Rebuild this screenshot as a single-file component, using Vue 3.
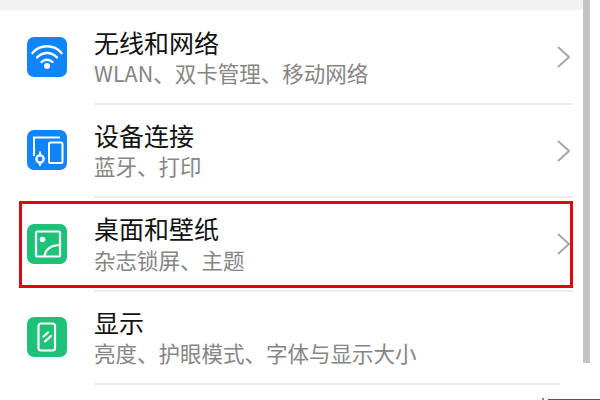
<template>
  <div class="screen">
    <div class="top-band"></div>
    <div class="main">
      <ul class="list">
        <li v-for="item in items" :key="item.title" class="row">
          <div class="icon" :class="item.color">
            <svg v-if="item.icon === 'wifi'" viewBox="0 0 40 40" width="40" height="40" fill="none" stroke="#fff" stroke-width="2.4" stroke-linecap="round">
              <path d="M5.5 16C13 7 27 7 34.5 16" />
              <path d="M10 20.5C16 14.5 24 14.5 30 20.5" />
              <path d="M14.5 25C17.5 22 22.5 22 25.5 25" />
              <circle cx="20" cy="29" r="3" fill="#fff" stroke="none" />
            </svg>
            <svg v-else-if="item.icon === 'devices'" viewBox="0 0 40 40" width="40" height="40" fill="none" stroke="#fff" stroke-width="2">
              <path d="M7 26V7.5H33" />
              <rect x="22" y="12.5" width="13.5" height="20.5" rx="1.5" />
              <circle cx="13" cy="29" r="3.6" stroke-width="2.4" />
              <path d="M13 21.5V25M13 33V36" />
            </svg>
            <svg v-else-if="item.icon === 'wallpaper'" viewBox="0 0 40 40" width="40" height="40" fill="none" stroke="#fff" stroke-width="2.2">
              <rect x="9" y="7.5" width="24" height="25" rx="1.5" />
              <circle cx="15.5" cy="15.5" r="2.8" fill="#fff" stroke="none" />
              <path d="M17.5 32C18.5 25 24.5 21.5 32 21" />
            </svg>
            <svg v-else viewBox="0 0 40 40" width="40" height="40" fill="none" stroke="#fff" stroke-width="2.2">
              <rect x="11.5" y="6.5" width="16.5" height="27" rx="2.5" />
              <path d="M16.5 19.5L21 15.5M18 24.5L24 19" stroke-linecap="round" />
            </svg>
          </div>
          <div class="body">
            <div class="text">
              <div class="title">{{ item.title }}</div>
              <div class="sub">{{ item.sub }}</div>
            </div>
            <svg v-if="item.chevron" class="chevron" viewBox="0 0 14 24" width="14" height="24" fill="none" stroke="#a6a6a6" stroke-width="2">
              <path d="M2 2L13 12L2 22" />
            </svg>
          </div>
        </li>
      </ul>
      <div class="scrollbar-track">
        <div class="scrollbar"></div>
      </div>
    </div>
    <div class="highlight"></div>
    <div class="corner-dot"></div>
    <div class="corner-mark"></div>
  </div>
</template>

<script setup>
const items = [
  { title: '无线和网络', sub: 'WLAN、双卡管理、移动网络', icon: 'wifi', color: 'blue', chevron: true },
  { title: '设备连接', sub: '蓝牙、打印', icon: 'devices', color: 'blue', chevron: true },
  { title: '桌面和壁纸', sub: '杂志锁屏、主题', icon: 'wallpaper', color: 'green', chevron: true },
  { title: '显示', sub: '亮度、护眼模式、字体与显示大小', icon: 'display', color: 'green', chevron: false },
];
</script>

<style>
html,
body {
  margin: 0;
  background: #fff;
}
</style>

<style scoped>
.screen {
  position: relative;
  width: 600px;
  height: 400px;
  overflow: hidden;
  background: #fff;
  font-family: "Noto Sans CJK SC", "Noto Sans", sans-serif;
}

.top-band {
  width: 583px;
  height: 10px;
  background: #f2f2f2;
}

.main {
  display: flex;
  height: 390px;
}

.list {
  flex: 1;
  margin: 0;
  padding: 1.5px 0 0;
  list-style: none;
}

.row {
  display: flex;
  height: 93.4px;
  padding-left: 27px;
  box-sizing: border-box;
}

.icon {
  flex: none;
  width: 40px;
  height: 40px;
  margin-top: 25.5px;
  border-radius: 7px;
}

.icon svg {
  display: block;
}

.blue {
  background: #0f85fb;
}

.green {
  background: #1dc278;
}

.body {
  flex: 1;
  display: flex;
  justify-content: space-between;
  align-items: center;
  margin-left: 27px;
  margin-right: 10px;
  padding-right: 3px;
  border-bottom: 2px solid #ececec;
}

.row:last-child .body {
  margin-right: 23px;
}

.text {
  padding-bottom: 2.8px;
}

.title {
  font-size: 25px;
  line-height: 36px;
  color: #111;
}

.sub {
  margin-top: -1.7px;
  font-size: 21.5px;
  line-height: 30px;
  color: #858585;
}

.scrollbar-track {
  flex: none;
  width: 17px;
  padding-right: 10px;
  box-sizing: border-box;
  margin-top: -10px;
}

.scrollbar {
  width: 7px;
  height: 363px;
  background: #c4c4c4;
}

.highlight {
  position: absolute;
  left: 19px;
  top: 201px;
  width: 554px;
  height: 87px;
  box-sizing: border-box;
  border: 3px solid #dc0812;
}

.corner-dot {
  position: absolute;
  left: 542px;
  top: 398px;
  width: 2px;
  height: 2px;
  background: #8a8a8a;
}

.corner-mark {
  position: absolute;
  left: 548px;
  top: 399px;
  width: 52px;
  height: 1px;
  background: #a63040;
}
</style>
